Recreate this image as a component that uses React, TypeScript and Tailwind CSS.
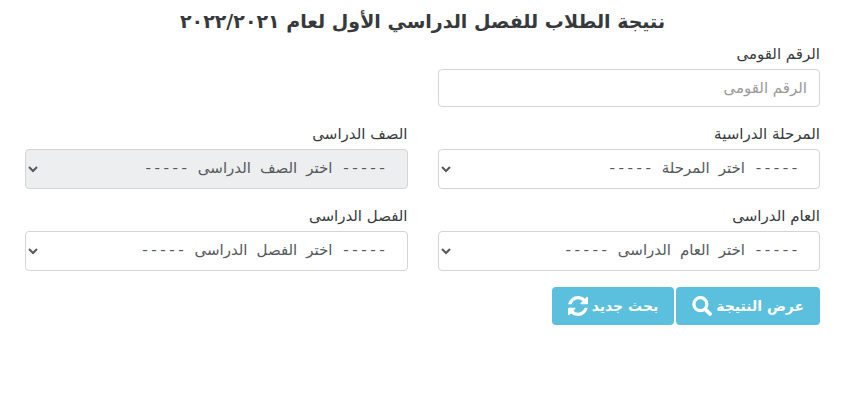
const fields = [
  { id: "stage", label: "المرحلة الدراسية", placeholder: "----- اختر المرحلة -----", disabled: false },
  { id: "grade", label: "الصف الدراسى", placeholder: "----- اختر الصف الدراسى -----", disabled: true },
  { id: "year", label: "العام الدراسى", placeholder: "----- اختر العام الدراسى -----", disabled: false },
  { id: "term", label: "الفصل الدراسى", placeholder: "----- اختر الفصل الدراسى -----", disabled: false },
];

function SearchIcon() {
  return (
    <svg viewBox="0 0 20 20" className="w-5 h-5" fill="none" stroke="currentColor" aria-hidden="true">
      <circle cx="8.4" cy="8.2" r="6.5" strokeWidth="3.2" />
      <path d="M13.4 13.4l4.6 4.6" strokeWidth="3.8" strokeLinecap="round" />
    </svg>
  );
}

function RefreshIcon() {
  return (
    <svg viewBox="0 0 1536 1536" className="w-5 h-5" fill="currentColor" aria-hidden="true">
      <path d="M1511 928q0 5-1 7-64 268-268 434.500T764 1536q-146 0-282.500-55T238 1324l-129 129q-19 19-45 19t-45-19-19-45V960q0-26 19-45t45-19h448q26 0 45 19t19 45-19 45l-137 137q71 66 161 102t187 36q134 0 250-65t186-179q11-17 53-117 8-23 30-23h192q13 0 22.500 9.500t9.500 22.500zm25-800v448q0 26-19 45t-45 19h-448q-26 0-45-19t-19-45 19-45l138-138Q969 256 768 256q-134 0-250 65T332 500q-11 17-53 117-8 23-30 23H50q-13 0-22.500-9.500T18 608v-7q65-268 270-434.500T768 0q146 0 284 55.500T1297 212l130-129q19-19 45-19t45 19 19 45z" />
    </svg>
  );
}

export default function App() {
  return (
    <div
      dir="rtl"
      className="bg-white text-[#373a3c] font-['DejaVu_Sans','Liberation_Sans',sans-serif] ps-[38px] pe-[25px] pt-1"
    >
      <h1 className="text-center text-[19px] leading-[34px] font-bold mb-[5px]">
        نتيجة الطلاب للفصل الدراسي الأول لعام ٢٠٢٢/٢٠٢١
      </h1>

      <form onSubmit={(e) => e.preventDefault()}>
        <div className="grid grid-cols-2 gap-x-[30px] gap-y-4">
          <div className="flex flex-col">
            <label htmlFor="national-id" className="text-[15px] leading-[22px] mb-1">
              الرقم القومى
            </label>
            <input
              id="national-id"
              type="text"
              placeholder="الرقم القومى"
              className="w-full h-[38px] px-3 text-[15px] bg-white border border-[#d5d5d5] rounded placeholder:text-[#999999]"
            />
          </div>
          <div />

          {/* Filters */}
          {fields.map((field) => (
            <div key={field.id} className="flex flex-col">
              <label htmlFor={field.id} className="text-[15px] leading-[22px] mb-1">
                {field.label}
              </label>
              <select
                id={field.id}
                disabled={field.disabled}
                className="w-full h-10 px-4 font-['Liberation_Mono','DejaVu_Sans',sans-serif] text-[15px] text-[#55595c] bg-white border border-[#d5d5d5] rounded disabled:bg-[#eceeef] disabled:opacity-100"
              >
                <option>{field.placeholder}</option>
              </select>
            </div>
          ))}
        </div>

        {/* Actions */}
        <div className="flex gap-0.5 mt-4">
          <button
            type="submit"
            className="flex items-center gap-1 h-[38px] px-4 rounded bg-[#5bc0de] text-white text-sm font-bold"
          >
            عرض النتيجة
            <SearchIcon />
          </button>
          <button
            type="reset"
            className="flex items-center gap-1 h-[38px] px-4 rounded bg-[#5bc0de] text-white text-sm font-bold"
          >
            بحث جديد
            <RefreshIcon />
          </button>
        </div>
      </form>
    </div>
  );
}
